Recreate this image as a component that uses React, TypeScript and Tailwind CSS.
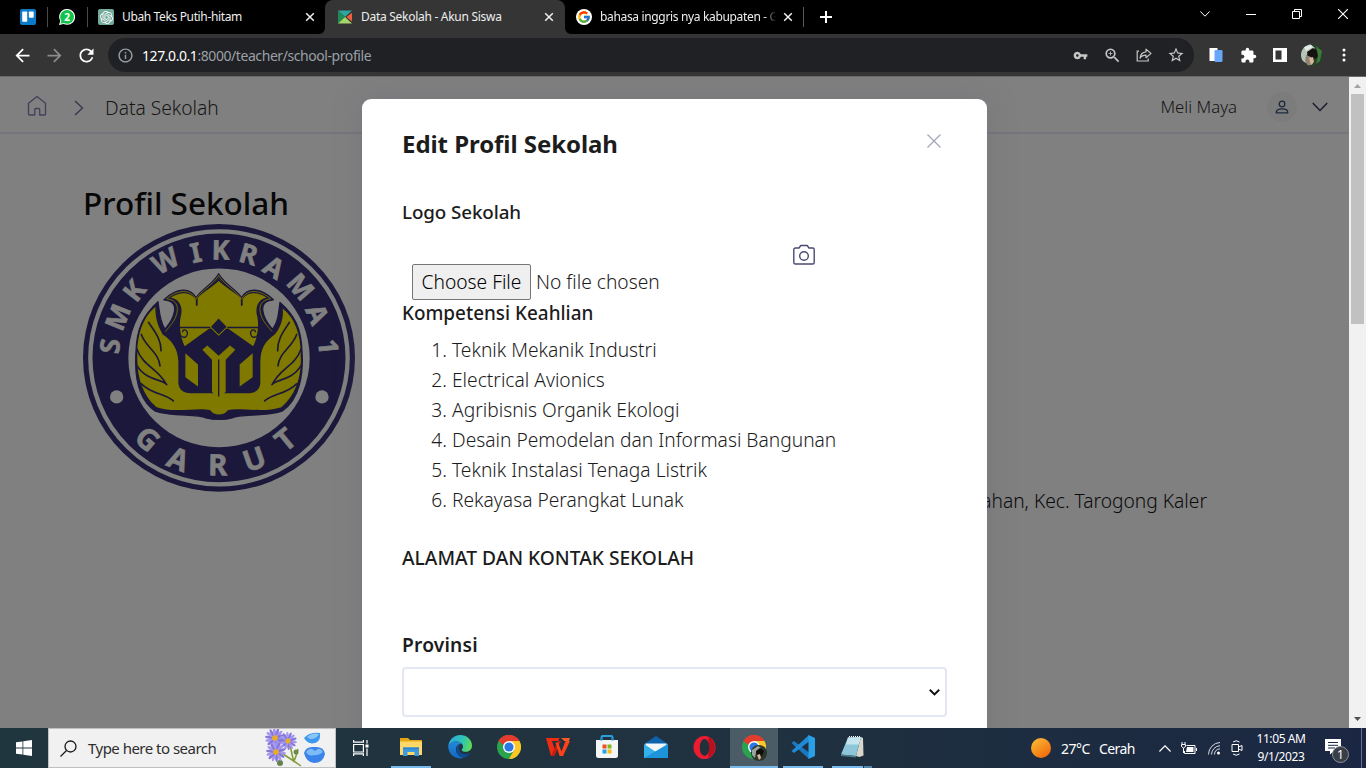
import React from "react";
import { FcGoogle } from "react-icons/fc";
import {
  MdArrowBack,
  MdArrowForward,
  MdExtension,
  MdInfoOutline,
  MdRefresh,
  MdStarBorder,
  MdVpnKey,
  MdZoomIn,
} from "react-icons/md";
import { SiOpenai } from "react-icons/si";

const COMPETENCIES = [
  "Teknik Mekanik Industri",
  "Electrical Avionics",
  "Agribisnis Organik Ekologi",
  "Desain Pemodelan dan Informasi Bangunan",
  "Teknik Instalasi Tenaga Listrik",
  "Rekayasa Perangkat Lunak",
];

/* ---------- Browser tabs ---------- */

function TabClose() {
  return (
    <svg className="size-[10px] shrink-0" viewBox="0 0 10 10" stroke="#f1f1f1" strokeWidth="1.5" fill="none">
      <path d="M1.2 1.2l7.6 7.6M8.8 1.2L1.2 8.8" />
    </svg>
  );
}

function TrelloIcon() {
  return (
    <svg className="size-4 shrink-0" viewBox="0 0 16 16">
      <rect width="16" height="16" rx="2" fill="#0b7bc9" />
      <rect x="2.2" y="2.4" width="5" height="10.4" rx="0.8" fill="#fff" />
      <rect x="8.9" y="2.4" width="4.8" height="6.3" rx="0.8" fill="#fff" />
    </svg>
  );
}

function WhatsappBadge() {
  return (
    <svg className="size-4 shrink-0" viewBox="0 0 16 16">
      <path d="M8.2 0A7.8 7.8 0 0 1 8.2 15.8 8 8 0 0 1 4.6 15L0 16l1.3-4.2A7.8 7.8 0 0 1 8.2 0z" fill="#fff" />
      <path d="M8.2 1A6.9 6.9 0 1 1 4.8 14l-3.4.8 1-3.1A6.9 6.9 0 0 1 8.2 1z" fill="#12c34b" />
      <text x="8.2" y="11.6" fontSize="10" fontWeight="700" fill="#fff" textAnchor="middle" fontFamily="Noto Sans, sans-serif">
        2
      </text>
    </svg>
  );
}

function SchoolAppIcon() {
  return (
    <svg className="size-4 shrink-0" viewBox="0 0 16 16">
      <path d="M1 1.5h14L8 8z" fill="#2fa7a0" />
      <path d="M1 1.5L8 8l-7 6.5z" fill="#1e8a55" />
      <path d="M1 14.5L8 8l7 6.5z" fill="#a6d66b" />
      <path d="M15 3.8v8.6L9.4 8z" fill="#f0603f" />
    </svg>
  );
}

function TabStrip() {
  return (
    <div className="flex h-[34px] shrink-0 items-center bg-black font-['Noto_Sans',sans-serif] text-[12px] text-[#eeeeee]">
      <div className="flex w-[47px] pl-5">
        <TrelloIcon />
      </div>
      <div className="h-5 w-px bg-[#4a4a4a]" />
      <div className="flex w-[39px] pl-[11px]">
        <WhatsappBadge />
      </div>
      <div className="h-5 w-px bg-[#4a4a4a]" />
      <div className="flex w-[237px] items-center pl-[10px] pr-[10px]">
        <span className="flex size-4 shrink-0 items-center justify-center rounded-[2px] bg-[#74aa9c]">
          <SiOpenai size={13} color="#ffffff" />
        </span>
        <span className="ml-2 grow whitespace-nowrap tracking-[-0.36px]">Ubah Teks Putih-hitam</span>
        <TabClose />
      </div>
      <div className="relative flex h-full w-[240px] items-center rounded-t-lg bg-[#353535] pl-3 pr-[11px]">
        <svg className="absolute -left-[6px] bottom-0 size-[6px]" viewBox="0 0 6 6" fill="#353535">
          <path d="M6 0v6H0A6 6 0 0 0 6 0z" />
        </svg>
        <svg className="absolute -right-[6px] bottom-0 size-[6px]" viewBox="0 0 6 6" fill="#353535">
          <path d="M0 0v6h6A6 6 0 0 1 0 0z" />
        </svg>
        <SchoolAppIcon />
        <span className="ml-2 grow whitespace-nowrap tracking-[-0.28px]">Data Sekolah - Akun Siswa</span>
        <TabClose />
      </div>
      <div className="flex w-[238px] items-center pl-[11px] pr-[10px]">
        <span className="flex size-4 shrink-0 items-center justify-center rounded-full bg-white">
          <FcGoogle size={14} />
        </span>
        <span className="ml-2 w-[178px] overflow-hidden whitespace-nowrap tracking-[-0.34px] [mask-image:linear-gradient(to_right,black_92%,transparent_99%)]">
          bahasa inggris nya kabupaten - G
        </span>
        <span className="ml-[5px] flex">
          <TabClose />
        </span>
      </div>
      <div className="h-5 w-px bg-[#5a5a5a]" />
      <svg className="ml-4 size-3" viewBox="0 0 12 12" stroke="#fff" strokeWidth="2">
        <path d="M6 0v12M0 6h12" />
      </svg>
      <div className="ml-auto flex h-full">
        <span className="flex w-[46px] justify-center pt-[11px]">
          <svg className="h-[6px] w-[10px]" viewBox="0 0 10 6" stroke="#fff" fill="none">
            <path d="M0.3 0.4L5 5.2 9.7 0.4" />
          </svg>
        </span>
        <span className="flex w-[46px] justify-center pt-[14px]">
          <span className="h-px w-[10px] bg-white" />
        </span>
        <span className="flex w-[46px] justify-center pt-[9px]">
          <svg className="size-[10px]" viewBox="0 0 10 10" stroke="#fff" fill="none">
            <path d="M0.5 2.5h7v7h-7zM2.5 2V0.5h7v7H8" />
          </svg>
        </span>
        <span className="flex w-[46px] justify-center pt-[9px]">
          <svg className="size-[10px]" viewBox="0 0 10 10" stroke="#fff" strokeWidth="1.1" fill="none">
            <path d="M0 0l10 10M10 0L0 10" />
          </svg>
        </span>
      </div>
    </div>
  );
}

/* ---------- Browser toolbar ---------- */

function Slot({ children }: { children: React.ReactNode }) {
  return <span className="flex w-8 shrink-0 items-center justify-center">{children}</span>;
}

function ProfilePhoto() {
  return (
    <svg className="size-[22px]" viewBox="0 0 22 22">
      <defs>
        <clipPath id="photo">
          <circle cx="11" cy="11" r="11" />
        </clipPath>
      </defs>
      <g clipPath="url(#photo)">
        <rect width="22" height="22" fill="#26402a" />
        <path d="M0 4l9-4 5 4-8 6-1 9-5-3z" fill="#b7c4ba" />
        <path d="M6 8l6-4 6 4-2 6-8 1z" fill="#15120f" />
        <path d="M5 11l5 2 2 7-5 2-3-5z" fill="#8f8577" />
        <path d="M8 14l4-1 1 5-3 3z" fill="#d9b49a" />
        <path d="M15 2l6 5-2 10-4 3 2-8z" fill="#3f7a3c" />
        <path d="M3 3l7-2 2 2-7 4z" fill="#e6ece8" />
      </g>
    </svg>
  );
}

function Toolbar() {
  return (
    <div className="flex h-[43px] shrink-0 items-center border-b border-[#6a6a6a] bg-[#353535] pl-[6px] text-white">
      <Slot>
        <MdArrowBack size={21} />
      </Slot>
      <Slot>
        <MdArrowForward size={21} color="#8b8b8b" />
      </Slot>
      <Slot>
        <MdRefresh size={21} />
      </Slot>
      <div className="ml-[6px] flex h-[34px] w-[1086px] items-center rounded-full bg-[#202124] pl-[9px] pr-[2px] text-[#c4c7c5]">
        <MdInfoOutline size={17} color="#9aa0a6" />
        <span className="ml-2 grow font-['Noto_Sans',sans-serif] text-[14px] tracking-[-0.43px] text-[#9aa0a6]">
          <span className="text-white">127.0.0.1</span>:8000/teacher/school-profile
        </span>
        <Slot>
          <MdVpnKey size={15} />
        </Slot>
        <Slot>
          <MdZoomIn size={19} />
        </Slot>
        <Slot>
          <svg className="size-4" viewBox="0 0 16 16" stroke="currentColor" strokeWidth="1.2" fill="none">
            <path d="M3 4.2H1.2v9.8h11V11.5" />
            <path d="M10 2.2l5 4.2-5 4.3V8.2C7.200 8.2 5.300 9 4 11.200c.3-3.600 2.300-6 6-6.400z" strokeLinejoin="round" />
          </svg>
        </Slot>
        <Slot>
          <MdStarBorder size={18} />
        </Slot>
      </div>
      <span className="ml-[6px] flex items-center">
        <Slot>
          <svg className="h-4 w-[14px]" viewBox="0 0 14 16">
            <rect x="0.500" y="1" width="8" height="13" fill="#fff" />
            <rect x="5.500" y="3" width="8" height="12" rx="1.300" fill="#6aa6f8" />
          </svg>
        </Slot>
        <Slot>
          <MdExtension size={17} />
        </Slot>
        <Slot>
          <svg className="size-[14px]" viewBox="0 0 14 14">
            <path d="M0 0h14v14H0zM2.500 2.500v9h6v-9z" fill="#fff" fillRule="evenodd" />
          </svg>
        </Slot>
        <Slot>
          <ProfilePhoto />
        </Slot>
        <Slot>
          <svg className="h-[14px] w-1" viewBox="0 0 4 14" fill="#fff">
            <circle cx="2" cy="2" r="1.500" />
            <circle cx="2" cy="7" r="1.500" />
            <circle cx="2" cy="12" r="1.500" />
          </svg>
        </Slot>
      </span>
    </div>
  );
}

/* ---------- School emblem ---------- */

const RING_TOP: [string, number, number][] = [
  ["S", 120, 528],
  ["M", 143, 441],
  ["K", 193, 362],
  ["W", 286, 272],
  ["I", 377, 248],
  ["K", 452, 240],
  ["R", 536, 252],
  ["A", 612, 292],
  ["M", 692, 350],
  ["A", 742, 432],
  ["1", 775, 530],
];
const RING_BOTTOM: [string, number, number][] = [
  ["G", 233, 806],
  ["A", 325, 866],
  ["R", 443, 884],
  ["U", 553, 866],
  ["T", 646, 808],
];

function RingLetter({ glyph, x, y, angle, size }: { glyph: string; x: number; y: number; angle: number; size: number }) {
  return (
    <text
      transform={`translate(${x} ${y}) rotate(${angle})`}
      y={size * 0.357}
      fontSize={size}
      fontWeight="700"
      textAnchor="middle"
      fill="#808080"
      stroke="#808080"
      strokeWidth="2"
      fontFamily="Noto Sans, sans-serif"
    >
      {glyph}
    </text>
  );
}

function Emblem() {
  const cx = 447;
  const cy = 563;
  const deg = 180 / Math.PI;
  return (
    <svg className="h-[268px] w-[272px]" viewBox="39 162 816 803" preserveAspectRatio="none">
      <ellipse cx={cx} cy={cy} rx="408" ry="401" fill="#1b183b" />
      <ellipse cx={cx} cy={cy} rx="386" ry="379" fill="none" stroke="#808080" strokeWidth="13" />
      <ellipse cx={cx} cy={cy} rx="272" ry="268" fill="#808080" />
      <circle cx="140" cy="680" r="20" fill="#808080" />
      <circle cx="756" cy="680" r="20" fill="#808080" />
      {RING_TOP.map(([g, x, y], i) => (
        <RingLetter key={i} glyph={g} x={x} y={y} size={81} angle={Math.atan2(x - cx, cy - y) * deg} />
      ))}
      {RING_BOTTOM.map(([g, x, y], i) => (
        <RingLetter key={i} glyph={g} x={x} y={y} size={88} angle={-Math.atan2(x - cx, y - cy) * deg} />
      ))}
      <g transform="translate(180 285)" strokeLinejoin="round" strokeLinecap="round">
        {/* dark outline of shield and wings */}
        <path
          d="M266 26C248 58 215 72 198 98C180 66 140 68 102 104C126 106 138 118 133 140C129 165 114 180 105 192C90 172 88 140 84 110C40 150 20 190 18 260C14 320 20 400 76 438C130 456 200 444 228 458C250 464 286 464 306 458C334 444 400 456 456 438C512 400 520 320 516 260C514 190 494 150 450 112C446 142 444 174 427 192C418 180 403 165 399 140C394 118 406 106 430 104C394 68 352 66 335 98C318 72 284 58 266 26z"
          fill="#1b183b"
          stroke="#1b183b"
          strokeWidth="4"
        />
        {/* crown */}
        <path
          d="M266 40C246 66 214 80 202 96V120H198V104C180 78 148 80 122 98C150 102 160 128 152 156C146 180 152 222 166 246L246 187L266 160L286 187L368 246C382 222 388 180 382 156C374 128 384 102 410 98C386 80 352 78 337 104V120H333V96C320 80 286 66 266 40z"
          fill="#807900"
        />
        <path
          d="M266 44C246 66 213 80 200 99V120M266 44C286 66 320 80 335 99V120"
          stroke="#1b183b"
          strokeWidth="5"
          fill="none"
        />
        <path
          d="M266 32C246 62 214 76 198 102C180 70 142 74 110 101C136 104 146 120 141 142C136 168 118 184 107 198M266 32C286 62 318 76 335 102C352 70 390 74 422 101C396 104 386 120 391 142C396 168 414 184 425 198"
          stroke="#807900"
          strokeWidth="2.5"
          fill="none"
        />
        {/* wings */}
        <path
          d="M76 126C34 160 20 220 22 272C20 330 36 390 80 426C130 444 200 426 240 434C252 452 282 452 294 434C334 426 400 444 454 426C498 390 516 330 512 272C514 220 498 160 458 130C462 160 450 190 434 208C404 230 392 250 391 290V352C390 374 376 384 352 384H182C160 384 146 374 145 352V290C144 250 126 226 98 208C84 184 76 160 76 126z"
          fill="#807900"
        />
        <path
          d="M56 172C74 200 94 222 93 257M34 208C48 248 86 260 90 302M21 252C38 302 84 310 108 356M20 300C48 348 100 342 110 358M34 356C66 388 104 384 130 407M478 172C460 200 442 222 443 257M500 208C486 248 448 260 444 302M513 252C496 302 450 310 428 356M514 300C486 348 436 342 426 358M500 356C468 388 430 384 404 407"
          stroke="#1b183b"
          strokeWidth="5"
          fill="none"
        />
        {/* geometric core */}
        <path d="M148 187H246M286 187H386" stroke="#1b183b" strokeWidth="5" />
        <path d="M160 246L238 190L266 212L294 190L374 246L366 262V350Q366 376 340 376H194Q166 376 166 350V262z" fill="#1b183b" />
        <path d="M266 158L292 185L266 210L241 185z" fill="#1b183b" stroke="#807900" strokeWidth="3" />
        <path d="M148 192C144 218 174 226 172 202C170 192 158 192 158 200M386 192C390 218 360 226 362 202C364 192 376 192 376 200" stroke="#1b183b" strokeWidth="4" fill="none" />
        <path d="M217 254L232 241L266 272L300 241L316 254L287 284V380L266 396L246 380V284z" fill="#807900" />
        <path d="M266 284V392" stroke="#1b183b" strokeWidth="4" />
        <path d="M166 264L204 298V364L166 336zM368 264L329 298V364L368 336z" fill="#807900" />
      </g>
    </svg>
  );
}

/* ---------- Page behind the dialog ---------- */

function PageHeader() {
  return (
    <header className="flex h-[57px] shrink-0 items-center border-b-2 border-[#75757d] pl-[26px] pr-[21px]">
      <svg className="mt-[3px] h-[22px] w-[22px]" viewBox="0 0 22 22" stroke="#40405a" strokeWidth="1.300" fill="none" strokeLinejoin="round">
        <path d="M2.500 8.200L11 1.500l8.500 6.700v10.800a1 1 0 0 1-1 1h-4.800v-5.500a1 1 0 0 0-1-1H9.800a1 1 0 0 0-1 1v5.500H3.500a1 1 0 0 1-1-1z" />
      </svg>
      <svg className="ml-[26px] mt-[6px] h-4 w-[10px]" viewBox="0 0 10 16" stroke="#35354a" strokeWidth="1.300" fill="none">
        <path d="M1 1l7.500 7L1 15" />
      </svg>
      <span className="ml-[21px] mt-[6px] text-[19.2px] font-light leading-6 text-[#161616]">Data Sekolah</span>
      <span className="ml-auto mt-[4px] text-[16.8px] font-light text-[#161616]">Meli Maya</span>
      <span className="ml-[30px] mt-[4px] flex size-[30px] items-center justify-center rounded-full bg-[#7c7c7c]">
        <svg className="size-[14px]" viewBox="0 0 14 14" stroke="#1d2a3a" strokeWidth="1.300" fill="none">
          <circle cx="7" cy="4" r="2.800" />
          <path d="M1.200 12.800c0-3 2.300-4 5.800-4s5.800 1 5.800 4z" strokeLinejoin="round" />
        </svg>
      </span>
      <svg className="ml-[15px] mt-[4px] h-[10px] w-4" viewBox="0 0 16 10" stroke="#1c1c30" strokeWidth="1.500" fill="none">
        <path d="M0.800 1L8 8.500 15.200 1" />
      </svg>
    </header>
  );
}

function SchoolPage() {
  return (
    <div className="flex grow flex-col bg-[#808080]">
      <PageHeader />
      <div className="flex justify-between pl-[83px] pr-[142px] pt-12">
        <div>
          <h1 className="mb-px text-[31.5px] font-medium leading-[41px] text-[#070707]">Profil Sekolah</h1>
          <Emblem />
        </div>
        <p className="pt-[307px] text-[19.2px] font-light leading-6 text-[#0a0a0a]">ahan, Kec. Tarogong Kaler</p>
      </div>
    </div>
  );
}

/* ---------- Dialog ---------- */

function EditDialog() {
  return (
    <div className="absolute left-[362px] top-[22px] flex h-[700px] w-[625px] flex-col rounded-t-[9px] bg-white px-10 pt-[29px] text-[19.2px] leading-6 text-[#1c1c1c] shadow-[0_0_30px_rgba(90,90,120,0.25)]">
      <div className="flex justify-between pr-[6px]">
        <h2 className="text-[24px] font-bold leading-8 tracking-[-0.06px]">Edit Profil Sekolah</h2>
        <svg className="mt-[6px] size-[14px]" viewBox="0 0 14 14" stroke="#a3a3bb" strokeWidth="1.200">
          <path d="M0.500 0.500l13 13M13.500 0.500l-13 13" />
        </svg>
      </div>
      <h3 className="mt-10 text-[18.8px] font-medium tracking-[-0.1px]">Logo Sekolah</h3>
      <div className="mt-5 flex h-14 items-start pl-[10px]">
        <button className="mt-5 h-9 w-[119px] rounded-[2px] border border-[#767676] bg-[#efefef] font-light text-black">
          Choose File
        </button>
        <span className="ml-[5px] mt-[26px] w-[257px] font-light">No file chosen</span>
        <svg className="h-[22px] w-[22px]" viewBox="0 0 22 22" stroke="#4a4a72" strokeWidth="1.400" fill="none">
          <path d="M0.800 5.500a1.500 1.500 0 0 1 1.500-1.500H6l1.800-2.500h6.400L16 4h3.700a1.500 1.500 0 0 1 1.500 1.500v13a1.500 1.500 0 0 1-1.500 1.500H2.300a1.500 1.500 0 0 1-1.500-1.500z" strokeLinejoin="round" />
          <circle cx="11" cy="12" r="4.300" />
        </svg>
      </div>
      <h3 className="mt-px text-[18.9px] font-medium">Kompetensi Keahlian</h3>
      <ol className="mt-[10px] list-decimal pl-[50px] font-light leading-[30px]">
        {COMPETENCIES.map((name) => (
          <li key={name}>{name}</li>
        ))}
      </ol>
      <h3 className="mt-[31px] font-medium">ALAMAT DAN KONTAK SEKOLAH</h3>
      <label className="mt-[63px] font-semibold tracking-[0.2px]">Provinsi</label>
      <div className="mt-[10px] flex h-[50px] shrink-0 items-center justify-end rounded-[4px] border-2 border-[#e4e6f3] pr-[5px]">
        <svg className="h-[7px] w-[11px]" viewBox="0 0 11 7" stroke="#111" strokeWidth="2" fill="none">
          <path d="M0.800 0.800L5.500 5.400 10.200 0.800" />
        </svg>
      </div>
    </div>
  );
}

function Scrollbar() {
  return (
    <div className="flex w-[17px] shrink-0 flex-col items-center bg-[#f1f1f1]">
      <svg className="mt-[7px] h-1 w-[7px]" viewBox="0 0 7 4" fill="#a3a3a3">
        <path d="M3.500 0L7 4H0z" />
      </svg>
      <div className="mt-[6px] h-[230px] w-[13px] bg-[#c1c1c1]" />
      <svg className="mb-[7px] mt-auto h-1 w-[7px]" viewBox="0 0 7 4" fill="#505050">
        <path d="M3.500 4L0 0h7z" />
      </svg>
    </div>
  );
}

/* ---------- Taskbar ---------- */

function ExplorerIcon() {
  return (
    <svg className="h-[20px] w-[22px]" viewBox="0 0 22 20">
      <path d="M0 1.500Q0 1 .7 1H8l2 2h11.300q.7 0 .7.700V18H0z" fill="#e6a716" />
      <path d="M0 4.500h22V18H0z" fill="#ffd869" />
      <path d="M3 10.500h16V19h-4.500v-4h-7v4H3z" fill="#3f9be0" />
      <path d="M3 10.500h16v2H3z" fill="#2f86cf" />
    </svg>
  );
}

function EdgeIcon() {
  return (
    <svg className="size-6" viewBox="0 0 24 24">
      <defs>
        <linearGradient id="edgeTop" x1="0" x2="1" y1="0.300" y2="0.500">
          <stop offset="0" stopColor="#2ba9e0" />
          <stop offset="0.600" stopColor="#2fc5b5" />
          <stop offset="1" stopColor="#62dc52" />
        </linearGradient>
        <linearGradient id="edgeLow" x1="0" x2="0" y1="0" y2="1">
          <stop offset="0" stopColor="#2189d8" />
          <stop offset="1" stopColor="#1567c0" />
        </linearGradient>
      </defs>
      <path d="M0.200 11.500C.8 5 5.800 0 12 0c7 0 12 5 12 10.500 0 4-3 6.300-6.300 6.300-2.400 0-4-.9-4-1.800 0-.7 1.300-1.200 1.300-3.200C15 8.500 11.600 6.500 8 6.500c-3.600 0-6.600 2-7.800 5z" fill="url(#edgeTop)" />
      <path d="M0.200 11.500C1.200 8 4.700 6.500 8 6.500c2.500 0 4.500.9 5.700 2.300C9.500 8.800 7.500 12 8 15.500c.6 4.500 5 7.500 9 7A12 12 0 0 1 .2 11.500z" fill="url(#edgeLow)" />
      <path d="M13.500 9C10 9.500 8 12 8.300 15.500c.5 4.500 5 7.200 8.700 7.100 2.500-1 4.400-2.800 5.300-4.500-5.300 2.700-11.300.5-11.300-4.600 0-2 1-3.700 2.500-4.500z" fill="#0f4a94" />
    </svg>
  );
}

function ChromeIcon() {
  return (
    <svg className="size-6" viewBox="0 0 24 24">
      <circle cx="12" cy="12" r="12" fill="#2aa34e" />
      <path d="M12 12L1.600 6A12 12 0 0 1 22.400 6z" fill="#e33b2e" />
      <path d="M12 6h10.400A12 12 0 0 1 12 24l5.200-9z" fill="#fcc624" />
      <path d="M1.600 6L6.800 15 12 12z" fill="#2aa34e" />
      <path d="M1.600 6A12 12 0 0 1 22.400 6H12a6 6 0 0 0-5.600 4z" fill="#e33b2e" />
      <circle cx="12" cy="12" r="6" fill="#fff" />
      <circle cx="12" cy="12" r="4.600" fill="#2b78e4" />
    </svg>
  );
}

function WpsIcon() {
  return (
    <svg className="h-[18px] w-6" viewBox="0 0 24 18">
      <path d="M0 0h13.500l-1.200 3H6l3 9-2.500 6H5z" fill="#ef2b14" />
      <path d="M15 0h9l-1.200 3h-4.500z" fill="#ff5a2a" />
      <path d="M5 18L12 3h3l-6.500 15z" fill="#c81d0c" />
      <path d="M9.500 4.500h2.500l3.500 9L19.500 3H24l-7 15h-3.500z" fill="#ff4019" />
    </svg>
  );
}

function StoreIcon() {
  return (
    <svg className="size-6" viewBox="0 0 24 24">
      <path d="M6.500 6V2.300Q6.500 1 7.800 1h8.400q1.300 0 1.300 1.300V6" stroke="#2ba0dd" strokeWidth="2" fill="none" />
      <path d="M1 5h22v15.500q0 2.500-2.500 2.500h-17Q1 23 1 20.500z" fill="#f4f5f6" />
      <path d="M7.500 9.500h4v4h-4z" fill="#f04f24" />
      <path d="M12.500 9.500h4v4h-4z" fill="#7fba1c" />
      <path d="M7.500 14.500h4v4h-4z" fill="#1fa3ea" />
      <path d="M12.500 14.500h4v4h-4z" fill="#fdb813" />
      <path d="M6.500 5.500V3M17.500 5.500V3" stroke="#1b87c4" strokeWidth="2" />
    </svg>
  );
}

function MailIcon() {
  return (
    <svg className="h-[22px] w-6" viewBox="0 0 24 22">
      <path d="M0 8L12 0l12 8v4H0z" fill="#0f63ae" />
      <path d="M1.500 7.500h21V16h-21z" fill="#f3f6f8" />
      <path d="M0 8l12 8L24 8v14H0z" fill="#35b0ea" />
      <path d="M0 22L24 8v14z" fill="#1c94dc" />
    </svg>
  );
}

function OperaIcon() {
  return (
    <svg className="size-[23px]" viewBox="0 0 24 24">
      <ellipse cx="12" cy="12" rx="11.500" ry="12" fill="#ee1c31" />
      <path d="M16 1a11.500 12 0 0 1 0 22z" fill="#b8101f" />
      <ellipse cx="12" cy="12" rx="5" ry="8.800" fill="#21313c" />
    </svg>
  );
}

function VsCodeIcon() {
  return (
    <svg className="size-6" viewBox="0 0 24 24">
      <path d="M0.500 8L3 6l15 11.500V24z" fill="#1a78c2" />
      <path d="M0.500 16L3 18 18 6.500V0z" fill="#1f8ad6" />
      <path d="M17.500 0L24 3v18l-6.500 3z" fill="#2a9fe8" />
    </svg>
  );
}

function NotepadIcon() {
  return (
    <svg className="h-[22px] w-6" viewBox="0 0 24 22">
      <path d="M21 1l2 1 .5 17.500-4 1.500-3.500-1z" fill="#d9d5c8" />
      <path d="M8 1.500L21 1 16 20 1 18.500z" fill="#8cc6d8" />
      <path d="M8 1.500L21 1l-2 7.500-13 0z" fill="#c4e5ee" />
      <path d="M1 18.500L16 20l-.5 1.500L1 20z" fill="#4f7c8c" />
      <path d="M9 .5l12-.3" stroke="#f5f5f5" strokeWidth="1.500" strokeDasharray="1 1" />
    </svg>
  );
}

function Daisy({ x, y, r }: { x: number; y: number; r: number }) {
  return (
    <g transform={`translate(${x} ${y})`}>
      {Array.from({ length: 14 }, (_, i) => (
        <ellipse key={i} cx={r * 0.6} cy="0" rx={r * 0.4} ry={r * 0.14} fill={i % 2 ? "#8778dc" : "#a596ee"} transform={`rotate(${i * 25.7 + 8})`} />
      ))}
      <circle r={r * 0.28} fill="#e7ad25" />
    </g>
  );
}

function SearchArt() {
  return (
    <svg className="h-[38px] w-[64px]" viewBox="0 0 64 38">
      <path d="M14 22Q24 28 37 37M26 16Q28 26 30 33M34 20Q32 28 30 32" stroke="#7f9c35" strokeWidth="1.500" fill="none" />
      <circle cx="32" cy="23" r="2.500" fill="#6c8a4c" />
      <circle cx="16" cy="34" r="3" fill="#62824d" />
      <Daisy x={11} y={9} r={10} />
      <Daisy x={24} y={12} r={9} />
      <Daisy x={12} y={23} r={10} />
      <path d="M40 9Q45 3 56 4Q57 12 51 14Q44 16 40 9z" fill="#3f97ee" />
      <path d="M43 8Q48 3 55 5Q53 10 46 10z" fill="#86c6fb" />
      <path d="M40 24Q42 17 50 18Q60 17 61 25Q59 34 50 34Q42 33 40 24z" fill="#3a83ea" />
      <path d="M42 23Q46 17 51 22Q56 17 59 23Q55 27 50 26Q45 28 42 23z" fill="#7dbcf8" />
    </svg>
  );
}

function TaskButton({ children, state = "idle" }: { children: React.ReactNode; state?: "idle" | "open" | "active" | "stacked" }) {
  return (
    <span className="flex w-[49px] flex-col items-center">
      <span className={state === "active" ? "flex h-[38px] w-12 items-center justify-center bg-[#4b5c67]" : "flex h-[38px] w-12 items-center justify-center"}>
        {children}
      </span>
      {state === "open" && <span className="h-[2px] w-10 bg-[#76b9ed]" />}
      {state === "active" && <span className="h-[2px] w-12 bg-[#76b9ed]" />}
      {state === "stacked" && (
        <span className="flex h-[2px] w-10 gap-px">
          <span className="w-[31px] bg-[#76b9ed]" />
          <span className="w-2 bg-[#5187ae]" />
        </span>
      )}
    </span>
  );
}

function Taskbar() {
  return (
    <div className="flex h-10 shrink-0 items-stretch bg-linear-to-r from-[#20363f] via-[#20323f] to-[#1b2742] font-['Noto_Sans',sans-serif] text-white">
      <span className="flex w-12 items-center justify-center">
        <svg className="size-4" viewBox="0 0 16 16" fill="#fff">
          <path d="M0 2.300L6.500 1.400v6.200H0zM7.300 1.300L16 0v7.600H7.300zM0 8.400h6.500v6.200L0 13.700zM7.300 8.400H16V16l-8.700-1.300z" />
        </svg>
      </span>
      <div className="flex w-72 items-center border border-[#bfbfbf] bg-[#f1f1f1] pl-[11px] text-[15px] text-[#2e2e2e]">
        <svg className="size-[17px]" viewBox="0 0 17 17" stroke="#1a1a1a" strokeWidth="1.300" fill="none">
          <circle cx="10.500" cy="6.500" r="5.500" />
          <path d="M6.500 10.500L0.500 16.500" />
        </svg>
        <span className="ml-[11px] grow tracking-[-0.520px]">Type here to search</span>
        <span className="mr-[7px]">
          <SearchArt />
        </span>
      </div>
      <span className="flex w-[49px] items-center justify-center">
        <svg className="size-4" viewBox="0 0 16 16" stroke="#fff" strokeWidth="1.200" fill="none">
          <path d="M0.600 4.500h9.800v7.500H.6zM0.600 0v2.200h9.800V0M.6 16v-2.200h9.800V16M14 0v3.500M14 8.500V16" />
          <path d="M12.500 4.500h3v3h-3z" fill="#fff" stroke="none" />
        </svg>
      </span>
      <span className="ml-px flex">
        <TaskButton state="open">
          <ExplorerIcon />
        </TaskButton>
        <TaskButton>
          <EdgeIcon />
        </TaskButton>
        <TaskButton>
          <ChromeIcon />
        </TaskButton>
        <TaskButton>
          <WpsIcon />
        </TaskButton>
        <TaskButton>
          <StoreIcon />
        </TaskButton>
        <TaskButton>
          <MailIcon />
        </TaskButton>
        <TaskButton>
          <OperaIcon />
        </TaskButton>
        <TaskButton state="active">
          <span className="relative flex">
            <ChromeIcon />
            <svg className="absolute -right-[1px] top-[10px] size-4" viewBox="0 0 16 16">
              <circle cx="8" cy="8" r="8" fill="#2a3629" />
              <path d="M1 5l6-4 3 2-5 4-1 6-3-3z" fill="#9aa69c" />
              <path d="M5 6l4-3 4 3-2 5-5 0z" fill="#100e0c" />
              <path d="M6 10l3-1 1 4-2 2z" fill="#d9b49a" />
            </svg>
          </span>
        </TaskButton>
        <TaskButton state="open">
          <VsCodeIcon />
        </TaskButton>
        <TaskButton state="stacked">
          <NotepadIcon />
        </TaskButton>
      </span>
      <div className="ml-auto flex items-center">
        <svg className="size-5" viewBox="0 0 20 20">
          <defs>
            <linearGradient id="sun" x1="0" x2="0.700" y1="0" y2="1">
              <stop offset="0" stopColor="#fbc13a" />
              <stop offset="1" stopColor="#f26a0b" />
            </linearGradient>
          </defs>
          <circle cx="10" cy="10" r="10" fill="url(#sun)" />
        </svg>
        <span className="ml-[10px] w-[38px] text-[14px] tracking-[-0.500px]">27°C</span>
        <span className="w-[60px] text-[14px] tracking-[-0.600px]">Cerah</span>
        <svg className="h-[7px] w-3" viewBox="0 0 12 7" stroke="#fff" strokeWidth="1.200" fill="none">
          <path d="M0.400 6.500L6 0.800l5.600 5.700" />
        </svg>
        <svg className="ml-[10px] h-[13px] w-4" viewBox="0 0 16 13" stroke="#fff" fill="none">
          <path d="M5.500 3.500h8.500v8H3.500V9M15.500 6v3" />
          <path d="M6 5h6.500v5H5z" fill="#fff" stroke="none" />
          <path d="M1 0v2M4 0v2M0.500 2.500h4v2l-2 1.500-2-1.500zM2.500 6v5" />
        </svg>
        <svg className="ml-[10px] size-[14px]" viewBox="0 0 14 14" stroke="#d5dbe3" fill="none">
          <path d="M1.500 13.500A12 12 0 0 1 13 1.500M4.500 13.500A9 9 0 0 1 13 4.700M7.500 13.500A6 6 0 0 1 13 7.800" />
          <circle cx="11.500" cy="12" r="1.500" fill="#fff" stroke="none" />
        </svg>
        <svg className="ml-[10px] h-4 w-3" viewBox="0 0 12 16" stroke="#fff" fill="none">
          <path d="M1 4.500h6.500v7H1zM7.500 7l3.500-1.500v5L7.500 9M2 2Q5 -.500 8.500 2M2 14q3 2.500 6.500 0" />
        </svg>
        <span className="w-[76px] text-center text-[12px] leading-[18px] tracking-[-0.400px]">
          11:05 AM
          <br />
          9/1/2023
        </span>
        <span className="ml-[6px] flex w-6">
          <svg className="mt-[7px] h-[25px] w-6" viewBox="0 0 24 25">
            <path d="M0 0h16v12H9l-4 3.500V12H0z" fill="#fff" />
            <path d="M3 3.500h10M3 6.300h10M3 9h7" stroke="#1c2a41" />
            <circle cx="15.500" cy="15.500" r="8" fill="#3a3f47" stroke="#8b9098" />
            <text x="15.500" y="20" fontSize="12" fill="#fff" textAnchor="middle" fontFamily="Noto Sans, sans-serif">
              1
            </text>
          </svg>
        </span>
        <span className="ml-[12px] mr-1 h-10 w-px bg-[#66718a]" />
      </div>
    </div>
  );
}

export default function App() {
  return (
    <div className="flex h-[768px] w-[1366px] flex-col overflow-hidden font-['Noto_Sans',sans-serif]">
      <TabStrip />
      <Toolbar />
      <main className="flex h-[651px] shrink-0 overflow-hidden">
        <div className="relative flex grow overflow-hidden">
          <SchoolPage />
          <EditDialog />
        </div>
        <Scrollbar />
      </main>
      <Taskbar />
    </div>
  );
}
